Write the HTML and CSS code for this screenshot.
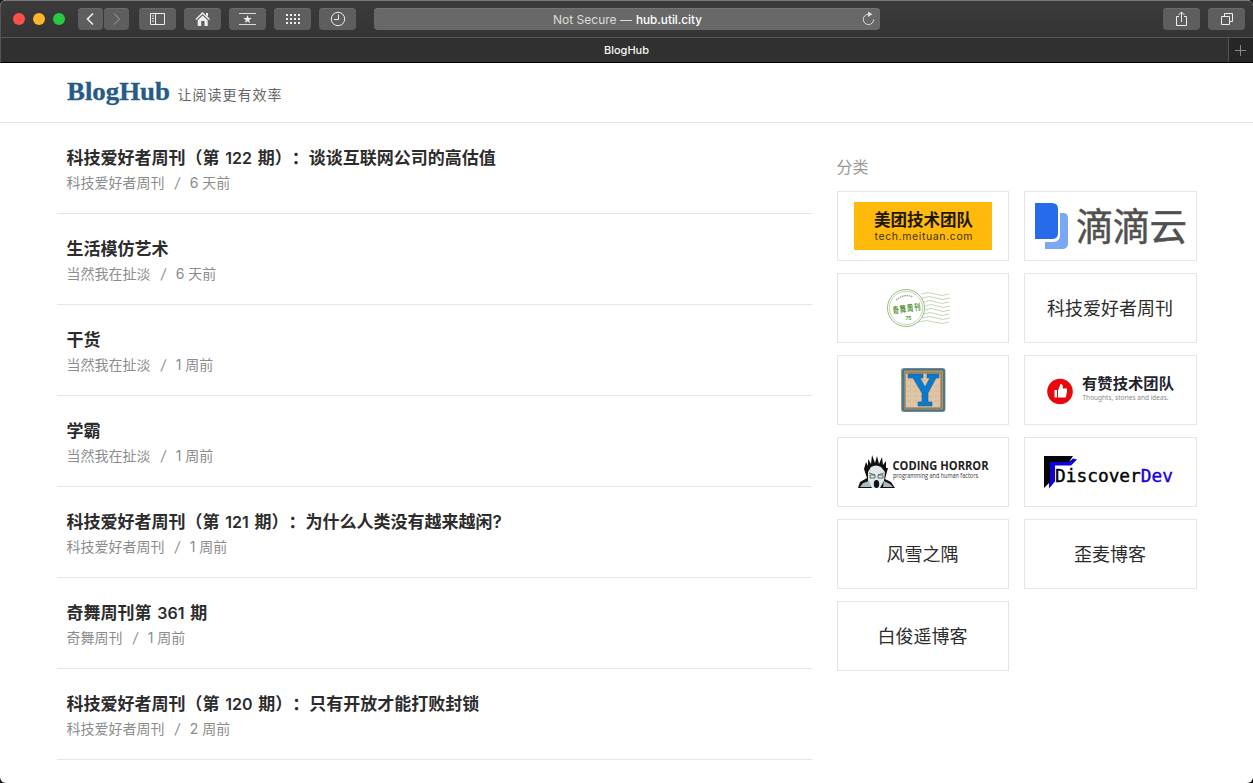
FILE: index.html
```html
<!DOCTYPE html>
<html lang="zh-CN">
<head>
<meta charset="utf-8">
<title>BlogHub</title>
<link rel="stylesheet" href="styles.css">
</head>
<body>
<div class="window">
  <div class="toolbar">
    <div class="lights"><i class="light red"></i><i class="light yellow"></i><i class="light green"></i></div>
    <div class="nav">
      <span class="btn small"><svg width="25" height="22"><path d="M15 5.500L9.500 11L15 16.500" stroke="#eee" stroke-width="1.600"/></svg></span>
      <span class="btn small"><svg width="25" height="22"><path d="M10 5.500L15.500 11L10 16.500" stroke="#858585" stroke-width="1.300"/></svg></span>
    </div>
    <div class="tools">
      <span class="btn"><svg width="37" height="22"><path d="M11.500 5.500h14v11h-14zM16.500 5.500v11M13 8h2M13 10.500h2M13 13h2" stroke="#eee"/></svg></span>
      <span class="btn"><svg width="37" height="22"><path d="M12 11.500L18.500 5L25.500 11.500" stroke="#eee" stroke-width="1.500"/><path d="M18.700 7.500l5 4.700V18h-3.200v-5h-3.300v5h-3.500v-5.800zM22 5h2v4l-2-2z" fill="#eee"/></svg></span>
      <span class="btn"><svg width="37" height="22"><path d="M10 5.500h17M10 16.500h17" stroke="#ddd"/><path d="M18.500 7l1.100 2.900 3.100.1-2.500 1.900.9 3-2.600-1.700-2.600 1.700.9-3-2.500-1.900 3.100-.1z" fill="#eee"/></svg></span>
      <span class="btn"><svg width="37" height="22"><path d="M12 7h14M12 11h14M12 15h14" stroke="#eee" stroke-width="2" stroke-dasharray="2 2"/></svg></span>
      <span class="btn"><svg width="37" height="22"><circle cx="19" cy="11" r="6.700" stroke="#eee"/><path d="M19.500 6.500v5H15" stroke="#eee"/></svg></span>
    </div>
    <div class="address">
      <svg class="addr-text" width="506" height="22"><text x="179" y="15.500" textLength="79" lengthAdjust="spacingAndGlyphs" fill="#ddd">Not Secure —</text><text x="262" y="15.500" textLength="66" lengthAdjust="spacingAndGlyphs" fill="#fff" class="strong">hub.util.city</text><path d="M494.500 6.200A5.200 5.200 0 1 0 499.700 11.400" stroke="#ddd"/><path d="M494 3.500l4.500 2.700-4.500 2.700z" fill="#ddd"/></svg>
    </div>
    <div class="right">
      <span class="btn"><svg width="37" height="22"><path d="M16 8.500h-2.500v9h10v-9H21M18.500 14V4M15.500 7l3-3 3 3" stroke="#eee"/></svg></span>
      <span class="btn"><svg width="37" height="22"><path d="M13.500 8.500h8v8h-8zM16.500 8V5.500h8v8H22" stroke="#eee"/></svg></span>
    </div>
  </div>
  <div class="tabs"><div class="tab">BlogHub</div><div class="plus"><svg width="24" height="24"><path d="M6 12.500h11M11.500 7v11" stroke="#888"/></svg></div></div>

  <header class="site-header">
    <svg width="240" height="46"><text class="brand" x="0" y="29" textLength="103" lengthAdjust="spacingAndGlyphs">BlogHub</text><text class="tagline" x="110.500" y="29" textLength="104">让阅读更有效率</text></svg>
  </header>

  <main class="content">
    <div class="list">
      <article class="post"><h2>科技爱好者周刊（第<span class="num"> 122 </span>期）：谈谈互联网公司的高估值</h2><p>科技爱好者周刊<span class="sep">/</span>6 天前</p></article>
      <article class="post"><h2>生活模仿艺术</h2><p>当然我在扯淡<span class="sep">/</span>6 天前</p></article>
      <article class="post"><h2>干货</h2><p>当然我在扯淡<span class="sep">/</span>1 周前</p></article>
      <article class="post"><h2>学霸</h2><p>当然我在扯淡<span class="sep">/</span>1 周前</p></article>
      <article class="post"><h2>科技爱好者周刊（第<span class="num"> 121 </span>期）：为什么人类没有越来越闲?</h2><p>科技爱好者周刊<span class="sep">/</span>1 周前</p></article>
      <article class="post"><h2>奇舞周刊第<span class="num"> 361 </span>期</h2><p>奇舞周刊<span class="sep">/</span>1 周前</p></article>
      <article class="post"><h2>科技爱好者周刊（第<span class="num"> 120 </span>期）：只有开放才能打败封锁</h2><p>科技爱好者周刊<span class="sep">/</span>2 周前</p></article>
    </div>
    <aside class="side">
      <h3>分类</h3>
      <div class="cards">
        <a class="card"><svg viewBox="0 0 172 70"><path d="M17 11h138v48H17z" fill="#ffba0b"/><text x="37" y="35" textLength="99" class="b" font-size="16.500" fill="#1c1705">美团技术团队</text><text x="37.500" y="48.500" textLength="98" font-size="10.500" fill="#40330a">tech.meituan.com</text></svg></a>
        <a class="card"><svg viewBox="0 0 172 70"><path d="M36 22h3q5 0 5 5v25q0 6-6 6H21v-7h8q7 0 7-7z" fill="#7ba7f7"/><path d="M11 12h17q6 0 6 6v24q0 6-6 6H11z" fill="#266bea"/><text x="52" y="49" textLength="111" font-size="37.500" fill="#505050" stroke="#505050" stroke-width=".5">滴滴云</text></svg></a>
        <a class="card"><svg viewBox="0 0 172 70"><g stroke="#b4cca4" stroke-width=".8"><path d="M84 21q7-3 14 0t14 0M85 25q7-3 14 0t14 0M87 29q6-3 12 0t13 0M88 33q6-3 12 0t13 0M88 37q6-3 12 0t13 0M87 41q6-3 12 0t13 0M85 45q7-3 14 0t14 0M81 49q8-3 16 0t15 0"/></g><circle cx="69" cy="35" r="18.500" fill="#fff" stroke="#8db474" stroke-width=".9"/><circle cx="69" cy="35" r="16.600" stroke="#a9c596" stroke-width=".7"/><path d="M59 27q9-7 17-3" stroke="#94ae82" stroke-width="1.500" stroke-dasharray="1.500 .8"/><text transform="rotate(-8 69 35) translate(55.500 39) scale(.82 1.200)" textLength="34" class="b" font-size="7.500" fill="#5c9540">奇舞周刊</text><text x="68.500" y="47" font-size="5" class="b" fill="#5c9540">75</text></svg></a>
        <a class="card">科技爱好者周刊</a>
        <a class="card"><svg viewBox="0 0 172 70"><rect x="64" y="13" width="44.500" height="44" rx="3" fill="#b59258"/><rect x="66" y="14.500" width="41" height="41" rx="2" stroke="#3a79a0" stroke-width="2"/><path d="M68 18h36v35H68z" fill="#dec5a8" stroke="#816b4d"/><path d="M70 25h30M69 31h33M69 36h33M69 41h33M69 46h33" stroke="#ccb296" stroke-width=".8" stroke-dasharray="5 2"/><path d="M71 19h15v4h-3l5 9 5-9h-3v-4h12v4h-3l-8 15v9h4v4H81v-4h4v-9l-9-15h-5z" fill="#087bd0" stroke="#315a78" stroke-width=".6"/></svg></a>
        <a class="card"><svg viewBox="0 0 172 70"><circle cx="36" cy="36.500" r="12.800" fill="#e9060c"/><path d="M30.500 35h2.500v7.500h-2.500zM34 35.500l2.500-6.500q3 0 2.200 4.500h4.300v3l-1.200 6H34z" fill="#fff"/><text x="58" y="34" textLength="92" class="b" font-size="15.300" fill="#22242b">有赞技术团队</text><text x="58.500" y="44.500" textLength="86" font-size="7" fill="#888" class="noto" lengthAdjust="spacingAndGlyphs">Thoughts, stories and ideas.</text></svg></a>
        <a class="card"><svg viewBox="0 0 172 70"><path d="M21 51l2-6 7-4-3-9 2-7 2 4 0-7 3 5 1-9 3 8 2-7 2 8 3-7 1 8 3-4 0 7 2 0-3 11 6 3 4 6z" fill="#111"/><path d="M31 35l3-5q5-3 10 0l4 5-1 9-4 7h-8l-4-6z" fill="#dfe8ea"/><path d="M32 36l6 2m3 0l6-2M33 38h5v3h-5zM41 38h5v3h-5z" stroke="#435055" stroke-width=".8"/><ellipse cx="39.500" cy="47" rx="2.700" ry="4" fill="#111"/><path d="M23 50l3-4 6-2 2 6M46 50l1-6 6 3 3 3" fill="#a8bcc2"/><text x="55.500" y="32.500" textLength="96" lengthAdjust="spacingAndGlyphs" class="open b" font-size="12" fill="#222">CODING HORROR</text><text x="56" y="41" textLength="85" lengthAdjust="spacingAndGlyphs" class="open" font-size="6.500" fill="#333">programming and human factors</text></svg></a>
        <a class="card"><svg viewBox="0 0 172 70"><path d="M49 21.500l4 1-6 6H31v16l-6 7v-6l1-2V24h20z" fill="#0c00df"/><path d="M20 19h29l-4 6H26v20l-6 6z" fill="#050505"/><text x="31" y="45" class="mono" textLength="118" lengthAdjust="spacingAndGlyphs" font-size="18" fill="#000" stroke="#000">Discover<tspan fill="#1900dc" stroke="#1900dc">Dev</tspan></text></svg></a>
        <a class="card">风雪之隅</a>
        <a class="card">歪麦博客</a>
        <a class="card">白俊遥博客</a>
      </div>
    </aside>
  </main>
</div>
</body>
</html>
```
FILE: styles.css
```css
* { box-sizing: border-box; }
body { margin: 0; background: #1b1b1b; font-family: Inter, "Noto Sans CJK SC", sans-serif; text-spacing-trim: space-all; }
svg { display: block; fill: none; }
.window { height: 783px; overflow: hidden; border-radius: 6px; background: #fff; }
.toolbar { display: flex; height: 38px; padding-top: 7px; align-items: center; background: linear-gradient(#3b3b3b, #343434); border-top: 1px solid #777; border-bottom: 1px solid #555; border-left: 1px solid #555; padding-bottom: 7px; }
.lights { display: flex; gap: 8px; margin-left: 12px; }
.light { width: 12px; height: 12px; border-radius: 50%; }
.red { background: #ff4f4b; }
.yellow { background: #fdb52b; }
.green { background: #26c940; }
.btn { width: 37px; height: 22px; border-radius: 4px; background: #5e5e5e; box-shadow: inset 0 1px #6a6a6a; }
.small { width: 25px; }
.nav { display: flex; gap: 1px; margin-left: 13px; }
.tools { display: flex; gap: 8px; margin-left: 10px; }
.address { width: 506px; height: 22px; margin-left: 18px; border-radius: 4px; background: #686868; box-shadow: inset 0 1px #747474; }
.addr-text { font: 12px Inter, sans-serif; }
.strong { font-weight: 500; }
.right { display: flex; gap: 8px; margin-left: auto; margin-right: 8px; }
.tabs { display: flex; height: 25px; background: #303030; border-bottom: 1px solid #000; border-left: 1px solid #555; }
.tab { flex: 1; padding-left: 24px; text-align: center; font: 500 11px/24px Inter, sans-serif; color: #f5f5f5; }
.plus { width: 25px; border-left: 1px solid #555; background: #262626; }
.site-header { height: 60px; padding: 8px 0 0 67px; border-bottom: 1px solid #e5e5e5; }
.brand { font: bold 26px "Liberation Serif", serif; fill: #265a88; stroke: #265a88; stroke-width: .3; }
.tagline { font: 14px "Noto Sans CJK SC", sans-serif; fill: #666; }
.content { display: flex; padding-left: 57px; }
.list { width: 755px; }
.post { height: 91px; padding: 23px 10px 0 9.5px; border-bottom: 1px solid #e5e5e5; }
.post h2 { margin: 0; font-size: 17px; line-height: 24px; font-weight: 600; color: #2c2c2c; white-space: nowrap; }
.num { font-size: 16px; white-space: pre; word-spacing: 1.7px; }
.post p { margin: 1px 0 0; font-size: 14px; line-height: 24px; color: #8c8c8c; }
.sep { display: inline-block; margin: 0 10.1px; transform: skewX(-8deg); }
.side { width: 360px; margin-left: 25px; padding-top: 32px; }
.side h3 { margin: 0 0 0 -.5px; height: 36px; font-size: 16px; line-height: 24px; font-weight: 400; color: #999; }
.cards { display: grid; grid-template-columns: 172px 173px; gap: 12px 15px; }
.card { display: flex; height: 70px; align-items: center; justify-content: center; border: 1px solid #e5e5e5; padding-right: 1px; padding-bottom: 2px; font-size: 18px; color: #2c2c2c; }
.card svg { width: 172px; height: 70px; flex: none; margin: 1px -1px -1px; }
.b { font-weight: 700; }
.open { font-family: "Open Sans", sans-serif; }
.noto { font-family: "Noto Sans", sans-serif; }
.mono { font-family: "DejaVu Sans Mono", monospace; stroke-width: .4; }
```
